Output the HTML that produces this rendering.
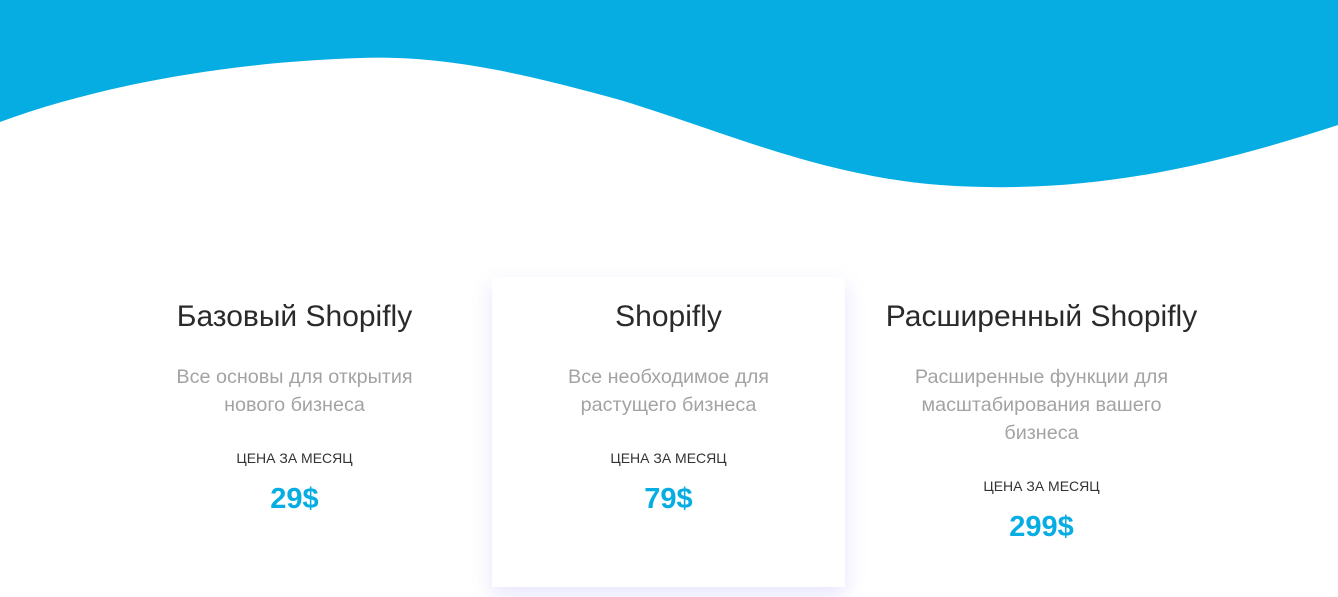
<!DOCTYPE html>
<html><head><meta charset="utf-8"><style>
body{margin:0;width:1338px;height:597px;overflow:hidden;background:#fff;font-family:"Liberation Sans",sans-serif;position:relative}
svg{position:absolute;left:0;top:0}
.col{position:absolute;top:277px;width:353px;text-align:center}
.card{background:#fff;height:310px;box-shadow:0 8px 20px rgba(120,110,240,0.18)}
h2{margin:0;padding-top:22px;font-weight:400;font-size:30px;color:#2a2a2a;line-height:36px}
p{margin:28px auto 0;width:260px;font-size:19.8px;line-height:28px;color:#a3a3a3}
.l{margin-top:30px;font-size:14px;color:#333;line-height:18px}
.pr{margin-top:15px;font-size:29px;font-weight:bold;color:#06ade3;line-height:34px}
</style></head><body>
<svg width="1338" height="200" viewBox="0 0 1338 200"><path d="M0 0H1338V125C1200 170 1080 195 940 185C820 176 720 130 620 100C520 72 440 55 360 58C230 62 100 85 0 122Z" fill="#06ade3"/></svg>
<div class="col" style="left:118px"><h2>Базовый Shopifly</h2><p>Все основы для открытия нового бизнеса</p><div class="l">ЦЕНА ЗА МЕСЯЦ</div><div class="pr">29$</div></div>
<div class="col card" style="left:492px"><h2>Shopifly</h2><p>Все необходимое для растущего бизнеса</p><div class="l">ЦЕНА ЗА МЕСЯЦ</div><div class="pr">79$</div></div>
<div class="col" style="left:865px"><h2>Расширенный Shopifly</h2><p>Расширенные функции для масштабирования вашего бизнеса</p><div class="l">ЦЕНА ЗА МЕСЯЦ</div><div class="pr">299$</div></div>
</body></html>
